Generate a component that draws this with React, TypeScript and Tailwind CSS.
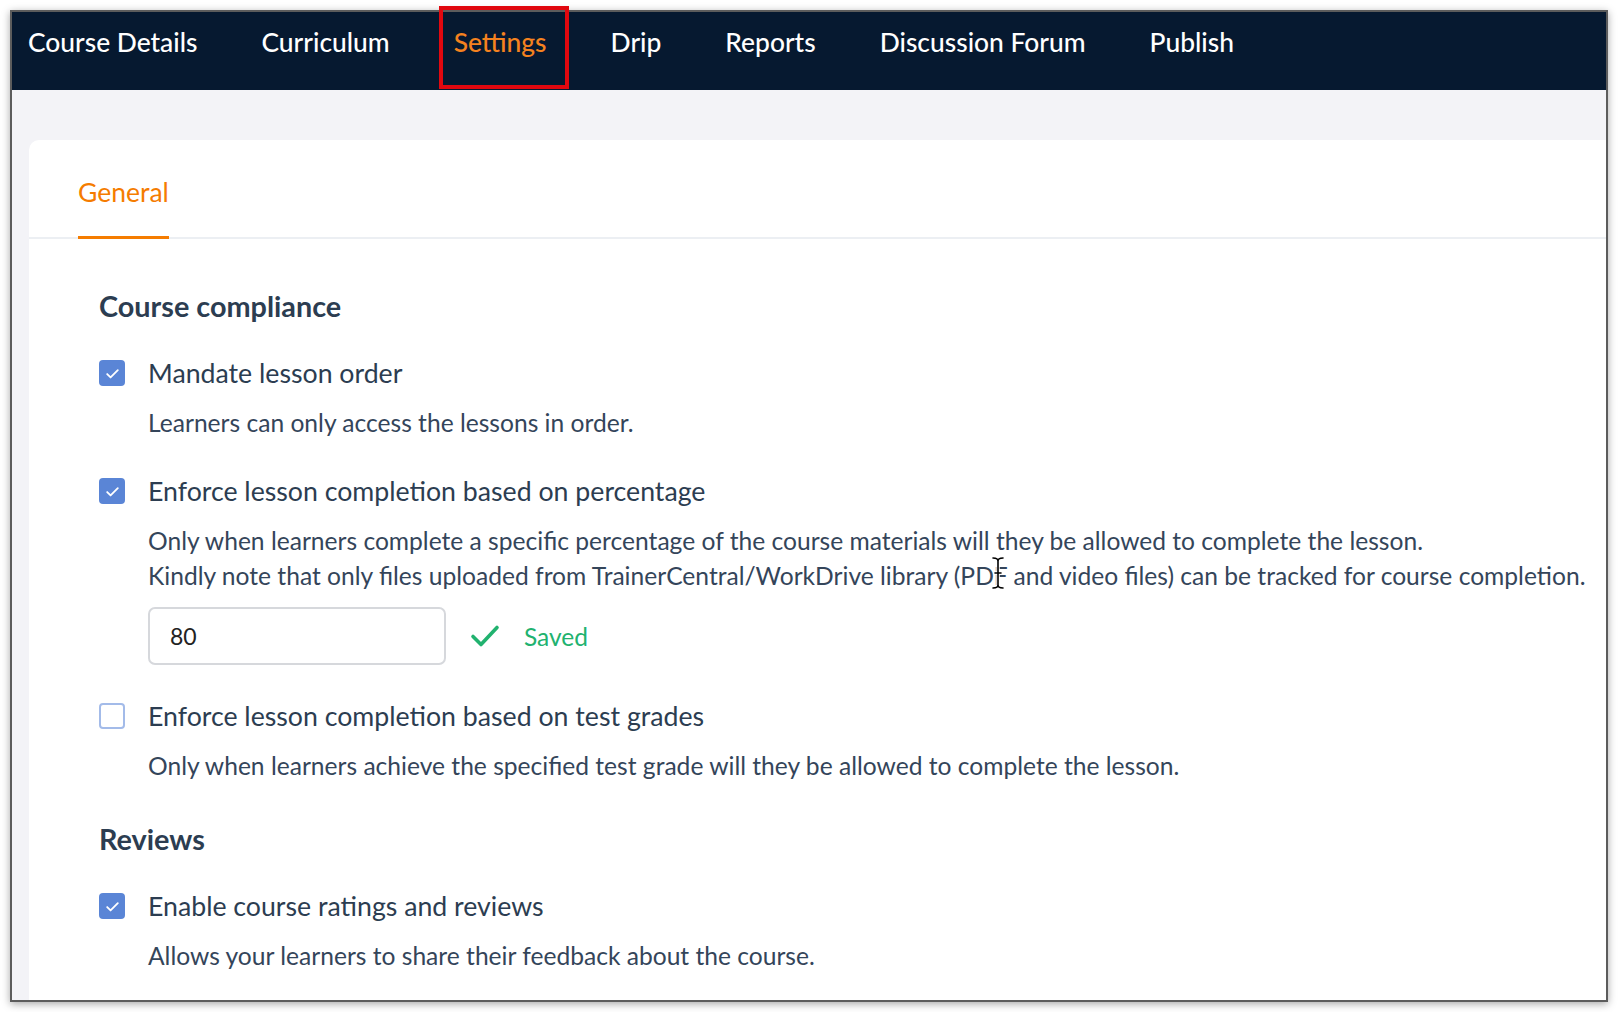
import React from "react";

const NAV = ["Course Details", "Curriculum", "Settings", "Drip", "Reports", "Discussion Forum", "Publish"];

const Check: React.FC<{ on?: boolean }> = ({ on }) =>
  on ? (
    <span className="w-[26px] h-[26px] shrink-0 rounded-[4px] bg-[#5a85d6] flex items-center justify-center">
      <svg width="17" height="17" viewBox="0 0 16 16" fill="none">
        <path d="M3 8.5l3.2 3.2L13 4.8" stroke="#fff" strokeWidth="1.7" strokeLinecap="round" strokeLinejoin="round" />
      </svg>
    </span>
  ) : (
    <span className="w-[26px] h-[26px] shrink-0 rounded-[4px] border-2 border-[#a3bbe9] bg-white" />
  );

const Option: React.FC<{ on?: boolean; label: string; children: React.ReactNode }> = ({ on, label, children }) => (
  <div className="flex flex-col">
    <div className="flex items-center gap-[23px]">
      <Check on={on} />
      <span className="text-[26.7px] leading-[32px] text-[#2c3d51]">{label}</span>
    </div>
    <div className="pl-[49px] mt-[16px] text-[24.6px] leading-[35px] text-[#34455a]">{children}</div>
  </div>
);

export default function App() {
  return (
    <div className="w-[1618px] h-[1012px] bg-white pl-[10px] pt-[10px] relative" style={{ fontFamily: "Lato, 'Open Sans', sans-serif" }}>
      <div className="w-[1598px] h-[992px] border-2 border-[#5c5c5c] shadow-[0_2px_8px_rgba(0,0,0,0.35)] flex flex-col overflow-hidden">
        {/* top nav */}
        <div className="h-[78px] shrink-0 bg-[#061930] flex items-center pl-[16px] pb-[17px] gap-[64px]">
          {NAV.map((n) => (
            <span
              key={n}
              className={`text-[26.4px] leading-none font-medium whitespace-nowrap ${n === "Settings" ? "text-[#f5821f]" : "text-white"}`}
            >
              {n}
            </span>
          ))}
        </div>

        {/* page */}
        <div className="flex-1 bg-[#f3f3f7] pt-[50px] pl-[17px]">
          <div className="bg-white rounded-tl-[10px] h-full">
            <div className="h-[99px] border-b-2 border-[#eceff3] flex items-end pl-[49px]">
              <div className="text-[26.5px] leading-none text-[#f57c00] pb-[31px] border-b-[3px] border-[#f57c00] -mb-[2px]">
                General
              </div>
            </div>

            <div className="pl-[70px] pt-[50px] flex flex-col">
              <h2 className="text-[28.8px] leading-[34px] font-bold text-[#2c3d51]">Course compliance</h2>

              <div className="mt-[34px]">
                <Option on label="Mandate lesson order">Learners can only access the lessons in order.</Option>
              </div>

              <div className="mt-[35px]">
                <Option on label="Enforce lesson completion based on percentage">
                  <div className="whitespace-nowrap">Only when learners complete a specific percentage of the course materials will they be allowed to complete the lesson.</div>
                  <div className="whitespace-nowrap">Kindly note that only files uploaded from TrainerCentral/WorkDrive library (PDF and video files) can be tracked for course completion.</div>
                  <div className="mt-[14px] flex items-center">
                    <div className="w-[298px] h-[58px] border-2 border-[#d6d8dc] rounded-[7px] flex items-center pl-[20px] text-[23px] text-[#222]">
                      80
                    </div>
                    <svg className="ml-[24px]" width="30" height="24" viewBox="0 0 30 24" fill="none">
                      <path d="M3 12.5l8 8L27 3.5" stroke="#21b26f" strokeWidth="3.6" strokeLinecap="round" strokeLinejoin="round" />
                    </svg>
                    <span className="ml-[24px] text-[24.5px] text-[#21b26f]">Saved</span>
                  </div>
                </Option>
              </div>

              <div className="mt-[35px]">
                <Option label="Enforce lesson completion based on test grades">
                  Only when learners achieve the specified test grade will they be allowed to complete the lesson.
                </Option>
              </div>

              <h2 className="mt-[39px] text-[28.8px] leading-[34px] font-bold text-[#2c3d51]">Reviews</h2>

              <div className="mt-[34px]">
                <Option on label="Enable course ratings and reviews">
                  Allows your learners to share their feedback about the course.
                </Option>
              </div>
            </div>
          </div>
        </div>
      </div>

      {/* annotation box around Settings */}
      <div className="absolute left-[439px] top-[6px] w-[130px] h-[83px] border-4 border-[#e1080f]" />

      {/* text cursor */}
      <svg className="absolute left-[991px] top-[556px]" width="14" height="34" viewBox="0 0 14 34" fill="none">
        <path d="M2 2c3 0 5 1 5 3v24c0 2-2 3-5 3M12 2c-3 0-5 1-5 3v24c0 2 2 3 5 3M4 17h6" stroke="#fff" strokeWidth="3.5" strokeLinecap="round" />
        <path d="M2 2c3 0 5 1 5 3v24c0 2-2 3-5 3M12 2c-3 0-5 1-5 3v24c0 2 2 3 5 3M4 17h6" stroke="#000" strokeWidth="1.6" strokeLinecap="round" />
      </svg>
    </div>
  );
}
